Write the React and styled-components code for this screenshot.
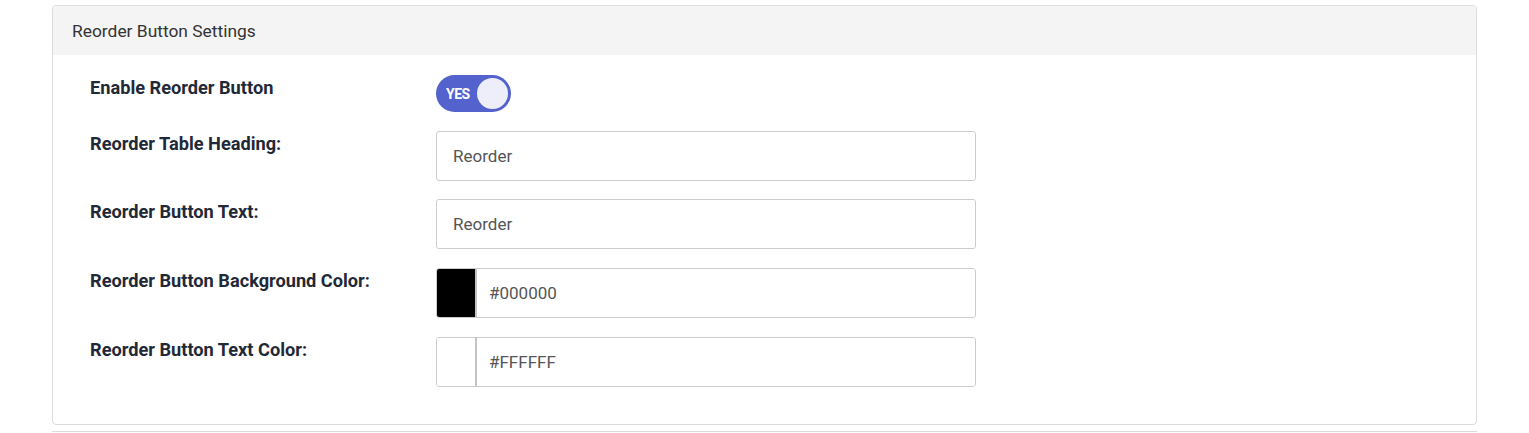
import styled, { createGlobalStyle } from "styled-components";

const Global = createGlobalStyle`
  body {
    margin: 0;
    background: #fff;
    font-family: Roboto, "Liberation Sans", sans-serif;
  }
`;

export default function App() {
  return (
    <Page>
      <Global />
      <Card>
        <Header>Reorder Button Settings</Header>
        <Body>
          <Row>
            <Label>Enable Reorder Button</Label>
            <Toggle>
              <span>YES</span>
              <Knob />
            </Toggle>
          </Row>
          <Row>
            <Label>Reorder Table Heading:</Label>
            <Input defaultValue="Reorder" />
          </Row>
          <Row>
            <Label>Reorder Button Text:</Label>
            <Input defaultValue="Reorder" />
          </Row>
          <Row>
            <Label>Reorder Button Background Color:</Label>
            <ColorField>
              <Swatch color="#000000" />
              <ColorText defaultValue="#000000" />
            </ColorField>
          </Row>
          <Row>
            <Label>Reorder Button Text Color:</Label>
            <ColorField>
              <Swatch color="#ffffff" />
              <ColorText defaultValue="#FFFFFF" />
            </ColorField>
          </Row>
        </Body>
      </Card>
      <NextCard />
    </Page>
  );
}

const Page = styled.div`
  padding: 5px 52px 0 52px;
  width: 1425px;
`;

const Card = styled.div`
  border: 1px solid #dcdcdc;
  border-radius: 4px;
  overflow: hidden;
  background: #fff;
`;

const Header = styled.div`
  background: #f4f4f4;
  height: 49px;
  display: flex;
  align-items: center;
  padding-left: 19px;
  font-size: 17.4px;
  color: #333;
`;

const Body = styled.div`
  padding: 20px 38px 37px 37px;
  display: flex;
  flex-direction: column;
  gap: 18.7px;
`;

const Row = styled.div`
  display: grid;
  grid-template-columns: 346px 540px;
  align-items: start;
`;

const Label = styled.label`
  font-weight: 700;
  font-size: 18.2px;
  line-height: 24px;
  padding-top: 1px;
  color: #1f2937;
`;

const Toggle = styled.div`
  width: 75px;
  height: 37px;
  border-radius: 19px;
  background: #5462cd;
  display: flex;
  align-items: center;
  justify-content: space-between;
  padding: 0 3px 0 10px;
  box-sizing: border-box;
  span {
    color: #fff;
    font-weight: 700;
    font-size: 14px;
    letter-spacing: -0.5px;
  }
`;

const Knob = styled.div`
  width: 31px;
  height: 31px;
  border-radius: 50%;
  background: #eeeefa;
`;

const Input = styled.input`
  box-sizing: border-box;
  width: 540px;
  height: 50px;
  border: 1px solid #cccccc;
  border-radius: 3px;
  padding: 0 16px;
  font-family: Roboto, "Liberation Sans", sans-serif;
  font-size: 17px;
  color: #555;
  outline: none;
`;

const ColorField = styled.div`
  box-sizing: border-box;
  width: 540px;
  height: 50px;
  border: 1px solid #cccccc;
  border-radius: 3px;
  display: flex;
  overflow: hidden;
`;

const Swatch = styled.div`
  width: 38px;
  background: ${(p) => p.color};
  border-right: 2px solid #c4c4c4;
`;

const ColorText = styled.input`
  flex: 1;
  border: none;
  padding: 0 12px;
  font-family: Roboto, "Liberation Sans", sans-serif;
  font-size: 17px;
  color: #555;
  outline: none;
`;

const NextCard = styled.div`
  margin-top: 6px;
  height: 8px;
  border-top: 1px solid #dcdcdc;
`;
